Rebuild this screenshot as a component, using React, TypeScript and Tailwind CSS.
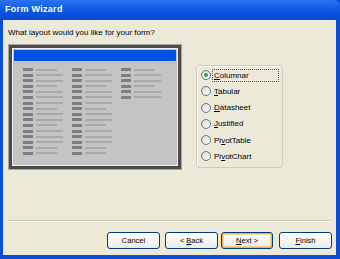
import React from "react";

const FONT = "font-['Tahoma','Liberation_Sans',Arial,sans-serif]";

// bar lengths in the layout preview: 1 = long, 0 = short
const COL_A = [0, 1, 1, 0, 1, 1, 1, 0, 1, 1, 0, 1, 1, 1, 0, 0];
const COL_B = [0, 1, 1, 0, 1, 1, 1, 0, 1, 1, 0, 1, 1, 1, 0, 0];
const COL_C = [0, 1, 1, 0, 1, 1];

const OPTIONS = [
	{ pre: "", key: "C", post: "olumnar" },
	{ pre: "", key: "T", post: "abular" },
	{ pre: "", key: "D", post: "atasheet" },
	{ pre: "", key: "J", post: "ustified" },
	{ pre: "Pi", key: "v", post: "otTable" },
	{ pre: "Pi", key: "v", post: "otChart" },
];

function PreviewColumn({ rows }: { rows: number[] }) {
	return (
		<div className="flex flex-col gap-[2.6px] w-[49px]">
			{rows.map((long, i) => (
				<div key={i} className="flex items-center h-[3px]">
					<div className="w-[10px] h-[3px] bg-[#7f7f7f]" />
					<div
						className={
							long
								? "ml-[3px] w-[27px] h-[2px] bg-[#a9a9a9]"
								: "ml-[3px] w-[21px] h-[2px] bg-[#a9a9a9]"
						}
					/>
				</div>
			))}
		</div>
	);
}

function Radio({ checked }: { checked?: boolean }) {
	return (
		<div className="w-[10px] h-[10px] rounded-full border border-[#5d7a94] bg-gradient-to-br from-[#dcdad0] to-white flex items-center justify-center">
			{checked && <div className="w-[4px] h-[4px] rounded-full bg-[#2fa32f]" />}
		</div>
	);
}

function XpButton({
	children,
	primary,
}: {
	children: React.ReactNode;
	primary?: boolean;
}) {
	return (
		<div
			className={
				primary
					? "w-[52px] h-[17px] rounded-[3px] border border-[#003c74] bg-gradient-to-b from-white to-[#ecebe6] flex items-center justify-center text-[7.5px] text-black shadow-[inset_0_0_0_1.5px_#f8b33a]"
					: "w-[53px] h-[17px] rounded-[3px] border border-[#003c74] bg-gradient-to-b from-white to-[#ecebe6] flex items-center justify-center text-[7.5px] text-black"
			}
		>
			{children}
		</div>
	);
}

export default function App() {
	return (
		<div
			className={`w-[340px] h-[259px] flex flex-col bg-[#0a4ed8] ${FONT}`}
		>
			{/* Title bar */}
			<div className="h-[20px] rounded-tr-[6px] bg-gradient-to-b from-[#2a74f0] via-[#0a57e3] to-[#0849cf] flex items-center pl-[5px]">
				<span className="text-white font-bold text-[9px] tracking-[0.3px]">
					Form Wizard
				</span>
			</div>

			{/* Body */}
			<div className="flex-1 ml-[3px] mr-[4px] mb-[4px] bg-[#ece9d8] flex flex-col">
				<p className="pt-[7px] pl-[5px] text-[8px] leading-[11px] text-black">
					What layout would you like for your form?
				</p>

				<div className="flex items-start mt-[6px]">
					{/* Layout preview */}
					<div className="ml-[5px] w-[174px] h-[126px] border border-[#a6a6a0] bg-[#4c4c4c] p-[3px]">
						<div className="h-full border border-[#eeeeee] bg-[#c4c4c4] p-[1px] flex flex-col">
							<div className="h-[11px] bg-[#0050e3]" />
							<div className="flex pl-[9px] pt-[7px]">
								<PreviewColumn rows={COL_A} />
								<PreviewColumn rows={COL_B} />
								<PreviewColumn rows={COL_C} />
							</div>
						</div>
					</div>

					{/* Options group */}
					<div className="ml-[14px] mt-[21px] w-[87px] h-[103px] rounded-[3px] border border-[#d0cdbb] shadow-[inset_1px_1px_0_#fbfaf5] flex flex-col pl-[4px] pt-[3px] gap-[3.6px]">
						{OPTIONS.map((o, i) => (
							<div key={i} className="flex items-center gap-[1px] h-[12.6px]">
								<Radio checked={i === 0} />
								<span
									className={
										i === 0
											? "text-[8px] text-black leading-[11px] px-[1px] w-[67px] border border-dotted border-[#555]"
											: "text-[8px] text-black leading-[11px] px-[2px]"
									}
								>
									{o.pre}
									<span className="underline">{o.key}</span>
									{o.post}
								</span>
							</div>
						))}
					</div>
				</div>

				{/* Separator */}
				<div className="mt-auto mx-[5px] h-[2px] border-t border-[#c8c5b4] border-b border-b-white" />

				{/* Buttons */}
				<div className="flex items-center justify-end pr-[4px] pt-[10px] pb-[6px]">
					<XpButton>Cancel</XpButton>
					<div className="ml-[5px]">
						<XpButton>
							&lt; <span className="underline ml-[2px]">B</span>ack
						</XpButton>
					</div>
					<div className="ml-[3px]">
						<XpButton primary>
							<span className="underline">N</span>ext &gt;
						</XpButton>
					</div>
					<div className="ml-[6px]">
						<XpButton>
							<span className="underline">F</span>inish
						</XpButton>
					</div>
				</div>
			</div>
		</div>
	);
}
